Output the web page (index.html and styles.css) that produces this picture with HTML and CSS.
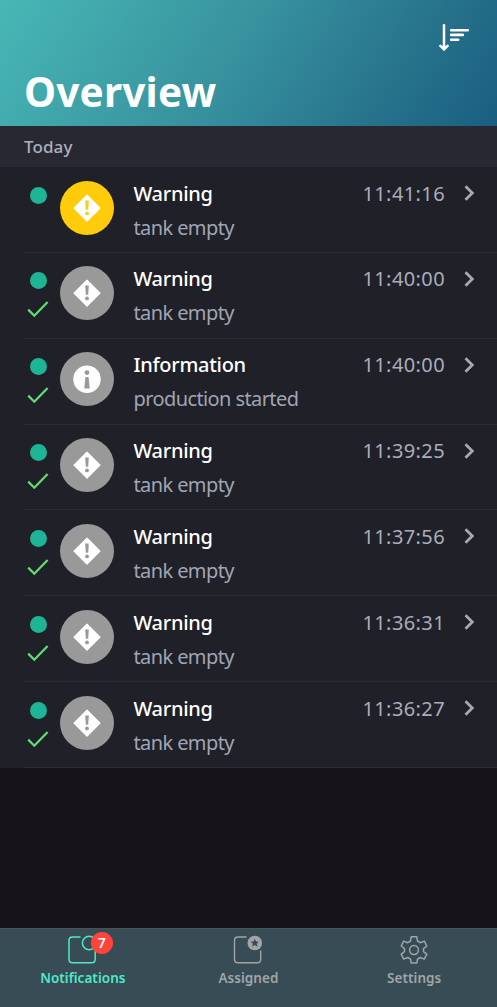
FILE: index.html
```
<!DOCTYPE html>
<html lang="en">
<head>
<meta charset="utf-8">
<title>Overview</title>
<link rel="stylesheet" href="styles.css">
</head>
<body>
<svg width="0" height="0" class="defs" aria-hidden="true">
  <symbol id="check" viewBox="0 0 22 18"><path d="M1.2 9.6 7.3 15.7 20.6 2" fill="none" stroke="#62dc70" stroke-width="2.3"/></symbol>
  <symbol id="chevron" viewBox="0 0 12 18"><path d="M1.5 2.2 8.3 9 1.5 15.8" fill="none" stroke="#a9a9a9" stroke-width="2.8"/></symbol>
  <symbol id="warning" viewBox="0 0 54 54"><path d="M27 14.2 40 27.2 27 40.2 14 27.2Z" fill="#fff" stroke="#fff" stroke-width="1.2" stroke-linejoin="round"/><path d="M25.2 19.5h3.6l-.6 9.3h-2.4Z" fill="currentColor"/><circle cx="27" cy="32.4" r="1.9" fill="currentColor"/></symbol>
  <symbol id="info" viewBox="0 0 54 54"><circle cx="27" cy="27.2" r="13.7" fill="#fff"/><circle cx="27" cy="20.6" r="2.4" fill="currentColor"/><path d="M25.4 25h3.2l1.1 11.5h-5.4Z" fill="currentColor"/></symbol>
</svg>
<div class="app">
  <header class="header">
    <svg class="sort" viewBox="0 0 32 30"><g fill="none" stroke="#fff" stroke-linecap="round"><path d="M5 3.2V27M1.4 23.8l3.6 3.6 3.6-3.6" stroke-width="2.5"/><path d="M12.2 8.2h16.6M12.2 12.9h11.6M12.2 17.7h7" stroke-width="2.6"/></g></svg>
    <h1 class="heading">Overview</h1>
  </header>
  <div class="section">Today</div>
  <main class="list">
    <article class="row"><div class="status"><span class="dot"></span></div><svg class="badge active"><use href="#warning"/></svg><div class="copy"><h2 class="title">Warning</h2><p class="detail">tank empty</p></div><time class="time">11:41:16</time><svg class="chevron"><use href="#chevron"/></svg></article>
    <article class="row"><div class="status"><span class="dot"></span><svg class="check"><use href="#check"/></svg></div><svg class="badge"><use href="#warning"/></svg><div class="copy"><h2 class="title">Warning</h2><p class="detail">tank empty</p></div><time class="time">11:40:00</time><svg class="chevron"><use href="#chevron"/></svg></article>
    <article class="row"><div class="status"><span class="dot"></span><svg class="check"><use href="#check"/></svg></div><svg class="badge"><use href="#info"/></svg><div class="copy"><h2 class="title">Information</h2><p class="detail">production started</p></div><time class="time">11:40:00</time><svg class="chevron"><use href="#chevron"/></svg></article>
    <article class="row"><div class="status"><span class="dot"></span><svg class="check"><use href="#check"/></svg></div><svg class="badge"><use href="#warning"/></svg><div class="copy"><h2 class="title">Warning</h2><p class="detail">tank empty</p></div><time class="time">11:39:25</time><svg class="chevron"><use href="#chevron"/></svg></article>
    <article class="row"><div class="status"><span class="dot"></span><svg class="check"><use href="#check"/></svg></div><svg class="badge"><use href="#warning"/></svg><div class="copy"><h2 class="title">Warning</h2><p class="detail">tank empty</p></div><time class="time">11:37:56</time><svg class="chevron"><use href="#chevron"/></svg></article>
    <article class="row"><div class="status"><span class="dot"></span><svg class="check"><use href="#check"/></svg></div><svg class="badge"><use href="#warning"/></svg><div class="copy"><h2 class="title">Warning</h2><p class="detail">tank empty</p></div><time class="time">11:36:31</time><svg class="chevron"><use href="#chevron"/></svg></article>
    <article class="row"><div class="status"><span class="dot"></span><svg class="check"><use href="#check"/></svg></div><svg class="badge"><use href="#warning"/></svg><div class="copy"><h2 class="title">Warning</h2><p class="detail">tank empty</p></div><time class="time">11:36:27</time><svg class="chevron"><use href="#chevron"/></svg></article>
  </main>
  <nav class="tabs">
    <a class="tab selected"><span class="tab-icon"><svg viewBox="0 0 30 30"><g fill="none" stroke="currentColor" stroke-width="1.5"><path d="M12.5 2H4.5Q1 2 1 5.5v18.8q0 3.5 3.5 3.5h19.2q3.5 0 3.5-3.5V15"/><circle cx="21.2" cy="8" r="6.8"/></g></svg><span class="count">7</span></span><span class="label">Notifications</span></a>
    <a class="tab"><span class="tab-icon"><svg viewBox="0 0 30 30"><path d="M13.5 2H5Q1.5 2 1.5 5.5v18.8q0 3.5 3.5 3.5h19.2q3.5 0 3.5-3.5V15.5" fill="none" stroke="currentColor" stroke-width="1.4"/><circle cx="21.8" cy="8" r="7.3" fill="currentColor"/><path d="m21.8 3.7 1.2 2.8 3 .2-2.3 2 .8 3-2.7-1.7-2.7 1.7.8-3-2.3-2 3-.2Z" fill="#374c55"/></svg></span><span class="label">Assigned</span></a>
    <a class="tab"><span class="tab-icon"><svg viewBox="0 0 30 30"><g fill="none" stroke="currentColor" stroke-width="1.5" stroke-linejoin="round"><path d="M12.2 1.8h5.6l.7 4.2 2.8 1.7 4-1.6 2.5 4.9-3.3 2.6v3l3.3 2.6-2.5 4.9-4-1.6-2.8 1.7-.7 3.8h-5.6l-.7-3.8-2.8-1.7-4 1.6-2.5-4.9 3.3-2.6v-3l-3.3-2.6 2.5-4.9 4 1.6L11.5 6Z"/><circle cx="15" cy="15" r="4.4"/></g></svg></span><span class="label">Settings</span></a>
  </nav>
</div>
</body>
</html>
```
FILE: styles.css
```
* { box-sizing: border-box; }
body { margin: 0; background: #15121a; font-family: "Noto Sans", sans-serif; }
.defs { position: absolute; }
.app { display: flex; flex-direction: column; height: 1007px; overflow: hidden; }
.header { flex: none; display: flex; flex-direction: column; height: 126px; padding: 22px 26px 0 24px; background: linear-gradient(123deg, #48b7b5 0%, #38939f 45%, #25708a 80%, #1a5e80 100%); }
.sort { align-self: flex-end; width: 32px; height: 30px; }
.heading { margin: 13px 0 0; font-size: 40.5px; line-height: 54px; font-weight: 700; color: #fff; letter-spacing: .2px; }
.section { flex: none; height: 41px; padding: 0 24px; font-size: 17px; line-height: 42px; font-weight: 500; color: #aab0be; background: #282833; letter-spacing: .1px; }
.list { flex: none; height: 601px; display: grid; grid-template-rows: repeat(7, 85.85px); background: #1f2028; }
.row { display: grid; grid-template-columns: 28px 62px 1fr auto 30px; padding: 0 21px 0 24px; }
.row { background: linear-gradient(#2c2d37, #2c2d37) 24px 100% / 100% 1px no-repeat; }
.status { display: flex; flex-direction: column; align-items: center; gap: 11px; padding-top: 19.5px; }
.dot { flex: none; width: 17px; height: 17px; border-radius: 50%; background: #1eb496; }
.check { flex: none; width: 22px; height: 18px; }
.badge { margin: 13.5px 0 0 8px; width: 54px; height: 54px; border-radius: 50%; background: #999; color: #999; }
.active { background: #ffcc0b; color: #ffcc0b; }
.copy { padding: 9.6px 0 0 19.5px; white-space: nowrap; }
.title, .detail { margin: 0; font-size: 20px; line-height: 34px; }
.title { color: #fff; font-weight: 500; letter-spacing: -.3px; }
.detail { color: #a0a5b4; font-weight: 400; letter-spacing: -.6px; }
.time { padding: 9.6px 1px 0 0; font-size: 20px; line-height: 34px; color: #a9adbb; letter-spacing: .4px; }
.chevron { justify-self: end; width: 12px; height: 18px; margin-top: 17px; }
.tabs { margin-top: auto; flex: none; height: 79px; display: grid; grid-template-columns: repeat(3, 1fr); background: #374c55; border-top: 1px solid #48525b; }
.tab { display: flex; flex-direction: column; align-items: center; padding-top: 6px; color: #a0a5a8; }
.selected { color: #50e8c7; }
.tab-icon { position: relative; width: 30px; height: 30px; }
.tab-icon svg { display: block; width: 30px; height: 30px; }
.count { position: absolute; left: 23px; top: -3px; width: 22px; height: 22px; border-radius: 50%; background: #ff443b; color: #fff; font-size: 14px; line-height: 22px; text-align: center; font-weight: 600; }
.label { margin-top: 3px; font-size: 13.5px; line-height: 20px; font-weight: 600; letter-spacing: .05px; }
```
